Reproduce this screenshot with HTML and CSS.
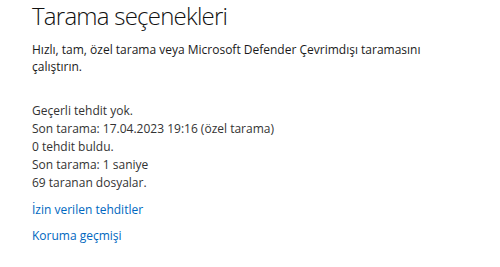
FILE: index.html
```html
<!doctype html>
<html>
<head>
<meta charset="UTF-8">
<meta name="viewport" content="width=device-width, initial-scale=1">
<title>Tarama seçenekleri</title>
<link rel="stylesheet" href="styles.css">
</head>
<body>
<div class="page">
<h1 class="title">Tarama seçenekleri</h1>
<p class="desc">Hızlı, tam, özel tarama veya Microsoft Defender Çevrimdışı taramasını çalıştırın.</p>
<div class="status">
<div>Geçerli tehdit yok.</div>
<div>Son tarama: 17.04.2023 19:16 (özel tarama)</div>
<div>0 tehdit buldu.</div>
<div>Son tarama: 1 saniye</div>
<div>69 taranan dosyalar.</div>
</div>
<div class="links">
<a href="#" class="link">İzin verilen tehditler</a>
<a href="#" class="link">Koruma geçmişi</a>
</div>
</div>
</body>
</html>
```

FILE: styles.css
```css
body{margin:0; padding:0; background-color:#ffffff; font-family:"Open Sans", Arial, sans-serif; color:#1a1a1a;}
.page{padding:0 32px; width:400px;}
.title{margin:0; font-size:24px; font-weight:300; line-height:32px; letter-spacing:-0.75px; color:#111111;}
.desc{margin:9px 0 0 0; font-size:12px; line-height:17px; color:#1a1a1a;}
.status{margin-top:27px; font-size:12px; line-height:18px; color:#333333;}
.links{display:flex; flex-direction:column; gap:9px; margin-top:9px; align-items:flex-start;}
.link{font-size:12px; line-height:17px; color:#0067c0; text-decoration:none;}
```
